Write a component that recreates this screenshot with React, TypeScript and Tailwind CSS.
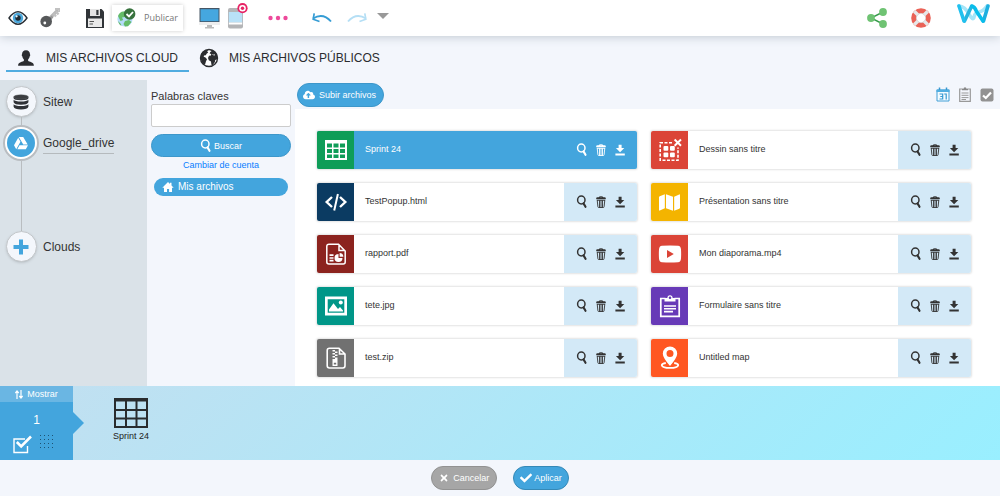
import { useState, type ReactNode } from "react";
import { FaCheck, FaCloudUploadAlt, FaGoogleDrive, FaMap, FaTimes } from "react-icons/fa";

type IconProps = { className?: string };

function Svg({ className = "", box = "0 0 24 24", children }: IconProps & { box?: string; children: ReactNode }) {
  return (
    <svg viewBox={box} className={className} fill="none" stroke="none" aria-hidden="true">
      {children}
    </svg>
  );
}

const SearchIcon = ({ className }: IconProps) => (
  <Svg className={className} box="0 0 12 14">
    <ellipse cx="5.3" cy="5" rx="3.7" ry="3.9" stroke="currentColor" strokeWidth="1.5" />
    <path d="M7.5 8.4 9.5 11.800" stroke="currentColor" strokeWidth="2.100" strokeLinecap="round" />
  </Svg>
);

const TrashIcon = ({ className }: IconProps) => (
  <Svg className={className} box="0 0 12 14">
    <path d="M1.200 4.200V3.200Q1.200 2.300 2.400 2.300H3.700Q4 1.200 6 1.200T8.300 2.300H9.600Q10.800 2.300 10.800 3.200v1ZM4.700 2.300h2.600Q6 1.700 4.700 2.300Z" fill="currentColor" fillRule="evenodd" />
    <path d="M2.200 5 2.900 11.700Q3 12.500 3.600 12.500H8.400Q9 12.500 9.100 11.700L9.800 5M2 5.300H10M4.500 5.200V12.500M6 5.200V12.500M7.500 5.200V12.500" stroke="currentColor" strokeWidth=".9" />
  </Svg>
);

const DownloadIcon = ({ className }: IconProps) => (
  <Svg className={className} box="0 0 12 14">
    <path d="M4.600 1.800H7.600V5H10.300L6.100 9.300 1.900 5H4.600ZM1.400 10.500H10.800V12.500H1.400Z" fill="currentColor" />
  </Svg>
);

const SheetIcon = ({ className }: IconProps) => (
  <Svg className={className}>
    <path
      fill="currentColor"
      fillRule="evenodd"
      d="M1 2H23V22H1ZM3 5.500V9.500H8V5.500ZM9.500 5.500V9.500H14.500V5.500ZM16 5.500V9.500H21V5.500ZM3 11V15H8V11ZM9.500 11V15H14.500V11ZM16 11V15H21V11ZM3 16.500V20H8V16.500ZM9.500 16.500V20H14.500V16.500ZM16 16.500V20H21V16.500Z"
    />
  </Svg>
);

const CodeIcon = ({ className }: IconProps) => (
  <Svg className={className}>
    <path d="M8 7 2.700 12 8 17M16 7 21.300 12 16 17" stroke="currentColor" strokeWidth="2.400" />
    <path d="M13.900 4 10.200 20.500" stroke="currentColor" strokeWidth="2" />
  </Svg>
);

const PdfIcon = ({ className }: IconProps) => (
  <Svg className={className}>
    <path d="M14.500 2.200H5Q2.800 2.200 2.800 4.400V20Q2.800 22 5 22H19.200Q21.200 22 21.200 20V9ZM15 2.500V8.500H21" stroke="currentColor" strokeWidth="1.500" />
    <path d="M5.500 13.200H9.500M5.500 16H9.500M5.500 18.700H9.500" stroke="currentColor" strokeWidth="1.700" />
    <path d="M14.500 12V16H18.500A4 4 0 1 1 14.500 12Z" fill="currentColor" />
    <path d="M15.600 11A4 4 0 0 1 19.400 14.800H15.600Z" fill="currentColor" />
  </Svg>
);

const ImageIcon = ({ className }: IconProps) => (
  <Svg className={className}>
    <path fill="currentColor" fillRule="evenodd" d="M1 2.500H23V21.500H1ZM3.700 5.200V18.800H20.300V5.200Z" />
    <path fill="currentColor" d="M5 17.500V15.500L9.500 9.300 14 15 16 13 19 16.500V17.500Z" />
    <circle cx="16.800" cy="8.500" r="2" fill="currentColor" />
  </Svg>
);

const ZipIcon = ({ className }: IconProps) => (
  <Svg className={className}>
    <path d="M15 2.200H5.500Q3.200 2.200 3.200 4.400V19.800Q3.200 22 5.500 22H18.800Q21 22 21 19.800V8ZM15.500 2.500V8H21" stroke="currentColor" strokeWidth="1.600" />
    <path d="M8.500 4H11V5.500H8.500ZM11 5.500H13.500V7H11ZM8.500 7H11V8.500H8.500ZM11 8.500H13.500V10H11ZM8.500 10H11V11.500H8.500ZM11 11.500H13.500V13H11Z" fill="currentColor" />
    <path fill="currentColor" fillRule="evenodd" d="M8.500 13H13.500V20H8.500ZM9.800 16.700V18.500H12.200V16.700Z" />
  </Svg>
);

const DrawingIcon = ({ className }: IconProps) => (
  <Svg className={className}>
    <path d="M14 4.800H2.200V22.200H20V9.500" stroke="currentColor" strokeWidth="1.600" strokeDasharray="3 1.500" />
    <g fill="currentColor">
      <rect x="5.500" y="8" width="4.800" height="4.800" rx="1" />
      <rect x="12" y="8" width="4.800" height="4.800" rx="1" />
      <rect x="5.500" y="14.500" width="4.800" height="4.800" rx="1" />
      <rect x="12" y="14.500" width="4.800" height="4.800" rx="1" />
    </g>
    <path d="M16.600 1.500 23 7.800M23 1.500 16.600 7.800" stroke="currentColor" strokeWidth="1.900" />
  </Svg>
);

const VideoIcon = ({ className }: IconProps) => (
  <Svg className={className}>
    <path fill="currentColor" fillRule="evenodd" d="M4 3.800Q12 3.200 20 3.800 22.800 4 23 7.500 23.300 12 23 16.500 22.800 20 20 20.200 12 20.800 4 20.200 1.200 20 1 16.500.700 12 1 7.500 1.200 4 4 3.800ZM9 8V16L15.800 12Z" />
  </Svg>
);

const FormIcon = ({ className }: IconProps) => (
  <Svg className={className}>
    <path d="M7.500 4.500H2.800V22.300H21.200V4.500H16.500" stroke="currentColor" strokeWidth="1.700" />
    <path fill="currentColor" fillRule="evenodd" d="M6.500 7.500V4H9.300Q9.600 1.200 12 1.200T14.700 4H17.500V7.500ZM12 2.500A1.300 1.300 0 1 0 12 5.100 1.300 1.300 0 0 0 12 2.500Z" />
    <path d="M6 12H18M6 14.800H18M6 17.600H15" stroke="currentColor" strokeWidth="1.600" />
  </Svg>
);

const PinIcon = ({ className }: IconProps) => (
  <Svg className={className}>
    <path fill="currentColor" fillRule="evenodd" d="M12 .500A7.200 7.200 0 0 1 19.200 7.700Q19.200 11.500 12 20 4.800 11.500 4.800 7.700A7.200 7.200 0 0 1 12 .500ZM12 4A3.500 3.500 0 1 0 12 11 3.500 3.500 0 0 0 12 4Z" />
    <path d="M7.800 17Q3.800 17.700 3.800 19.200 4.500 21.900 12 21.900T20.200 19.200Q20.200 17.700 16.200 17" stroke="currentColor" strokeWidth="1.800" />
  </Svg>
);

const PersonIcon = ({ className }: IconProps) => (
  <Svg className={className} box="0 0 16 16">
    <path fill="currentColor" d="M8 .300C10.700.300 12 2 12 4.500 12.500 4.700 12.300 6 11.700 6.300 11.500 7.800 11 8.700 10.100 9.400V10.800C11 12 15.800 11.700 15.900 15.700H.100C.200 11.700 5 12 5.900 10.800V9.400C5 8.700 4.500 7.800 4.300 6.300 3.700 6 3.500 4.700 4 4.500 4 2 5.300.300 8 .300Z" />
  </Svg>
);

const GlobeIcon = ({ className }: IconProps) => (
  <Svg className={className} box="0 0 20 20">
    <circle cx="10" cy="10" r="8.500" fill="#fff" stroke="currentColor" strokeWidth="1.400" />
    <path
      fill="currentColor"
      d="M1.800 7Q3 3.500 7 2L9.300 2.300 8.200 3.700 9.300 4.600 7.600 5.800 6.800 7.200 5 7.600 4.700 8.800 6.500 9.600 8 11.200 7 13.200 6.300 15.800 5 16.800Q2 14 1.500 10ZM10.800 1.500 15 2.800 18 6.500 18.700 10 17.600 11.500 16.200 12 15.900 14 13.600 17.200 12.400 16.700 12 13.500 9.800 12.200 9 10 10 7.800 12 7.400 12.200 6 10.600 5.600 11.300 4 12.500 3.200Z"
    />
    <path d="M13.500 6 14.800 7.300 16 6.500" stroke="#fff" strokeWidth=".8" />
  </Svg>
);

const DatabaseIcon = ({ className }: IconProps) => (
  <Svg className={className} box="0 0 16 16">
    <g fill="#303237">
      <path d="M.600 2.800V4.300Q.600 6.200 8 6.200T15.400 4.300V2.800Z" />
      <path d="M.600 5.700Q2 7.500 8 7.500T15.400 5.700V8.200Q14.500 10.700 8 10.700T.600 8.200ZM.600 10.200Q2 12 8 12T15.400 10.200V12.800Q14.500 15.400 8 15.400T.600 12.800Z" />
    </g>
    <ellipse cx="8" cy="2.900" rx="7.300" ry="2.200" fill="#3b3d41" stroke="#66696c" strokeWidth=".4" />
  </Svg>
);

const HomeIcon = ({ className }: IconProps) => (
  <Svg className={className} box="0 0 12 12">
    <path fill="currentColor" d="M6 1 8 3V1.800H9.500V4.400L11.700 6.700H10V11H7.100V8H5V11H2V6.700H.300Z" />
  </Svg>
);

const EyeIcon = ({ className }: IconProps) => (
  <Svg className={className} box="0 0 20 16">
    <path d="M1 8Q10-4.500 19 8 10 20.500 1 8Z" fill="#fff" stroke="#292f35" strokeWidth="1.400" />
    <circle cx="10" cy="8" r="5.200" fill="#4aa7db" />
    <circle cx="10" cy="8" r="2.700" fill="#202a32" />
    <circle cx="8.600" cy="6.300" r="1.100" fill="#e9f8ff" />
  </Svg>
);

const KeyIcon = ({ className }: IconProps) => (
  <Svg className={className} box="0 0 20 20">
    <path d="M8 12 18 2" stroke="#b7b7b7" strokeWidth="3.200" />
    <path d="M13.500 5.500 16 8.500M16 3.500 18.500 6.500M15 1H19.500V4" stroke="#c1c1c1" strokeWidth="2.200" />
    <path d="M8 13 12.500 8.500" stroke="#969696" strokeWidth="2.500" />
    <circle cx="6.200" cy="13.500" r="5.800" fill="#56585a" />
    <circle cx="4.800" cy="15" r="1.400" fill="#fff" />
  </Svg>
);

const SaveIcon = ({ className }: IconProps) => (
  <Svg className={className} box="0 0 18 19">
    <path d="M0 0H15.500L18 2.500V19H0Z" fill="#303438" />
    <path d="M4 0H14V7H4Z" fill="#e4e4e4" />
    <path d="M10.300 1H12.500V6H10.300Z" fill="#34383c" />
    <path d="M2 9.500H16V18H2Z" fill="#e9e9e9" />
    <path d="M3.500 12.500H8M3.500 15H7" stroke="#555" strokeWidth="1" />
  </Svg>
);

const PublishIcon = ({ className }: IconProps) => (
  <Svg className={className} box="0 0 19 20">
    <circle cx="8" cy="11" r="7.600" fill="#b5dcf8" />
    <path d="M1 8Q3 3 7 3.500L10 6 8 9 5 9.500 6.200 12 3.500 13ZM8 13 12 12 14.500 14 11 18.200 8 18.500 6.500 16ZM1 13 4 16 4.300 18Q1.500 16 1 13Z" fill="#65bc69" />
    <circle cx="12.600" cy="6" r="5.800" fill="#37723d" />
    <path d="M9.500 6 12 8.400 16 4" stroke="#fff" strokeWidth="1.800" />
  </Svg>
);

const DesktopIcon = ({ className }: IconProps) => (
  <Svg className={className} box="0 0 21 21">
    <path d="M.500 0H20.500V14H.500Z" fill="#465665" />
    <path d="M1.500 1.200H19.500V13.200H1.500Z" fill="#45a7df" />
    <path d="M0 14H21V17H0Z" fill="#eee" />
    <path d="M8 17H13V19H15V20.500H6V19H8Z" fill="#bbb" />
  </Svg>
);

const PhoneIcon = ({ className }: IconProps) => (
  <Svg className={className} box="0 0 20 26">
    <rect x="0" y="5" width="15" height="20.500" rx="2" fill="#b4b5b7" />
    <path d="M.800 9H14.200V19.500H.800Z" fill="#b9e1f7" />
    <path d="M.800 19.500H14.200V21.500H.800Z" fill="#fff" />
    <circle cx="14.500" cy="5.200" r="5.100" fill="#e72264" />
    <circle cx="14.500" cy="5.200" r="3.300" fill="#fff" />
    <circle cx="14.500" cy="5.200" r="1.700" fill="#e72264" />
  </Svg>
);

const UndoIcon = ({ className }: IconProps) => (
  <Svg className={className} box="0 0 20 10">
    <path d="M1 5.500Q11-.700 19 8.500" stroke="currentColor" strokeWidth="1.900" />
    <path d="M2.200.300 1.200 6.200 7.500 8.500" stroke="currentColor" strokeWidth="1.700" />
  </Svg>
);

const ShareIcon = ({ className }: IconProps) => (
  <Svg className={className} box="0 0 20 20">
    <path d="M16 4 4 10 16 16" stroke="#399b4c" strokeWidth="1.400" />
    <g fill="#6fc373">
      <circle cx="16" cy="4" r="3.900" />
      <circle cx="4" cy="10" r="3.900" />
      <circle cx="16" cy="16" r="3.900" />
    </g>
  </Svg>
);

const LifebuoyIcon = ({ className }: IconProps) => (
  <Svg className={className} box="0 0 20 20">
    <circle cx="10" cy="10" r="7.200" stroke="#ea6257" strokeWidth="5.200" />
    <path d="M3.200 3.200 7 7M13 13 16.800 16.800M16.800 3.200 13 7M7 13 3.200 16.800" stroke="#e6e8e9" strokeWidth="3.400" />
    <circle cx="10" cy="10" r="4.600" stroke="#d4dce0" strokeWidth=".7" />
  </Svg>
);

const BrandIcon = ({ className }: IconProps) => (
  <Svg className={className} box="0 0 33 19">
    <g strokeWidth="3.600" strokeLinecap="round" strokeLinejoin="round">
      <path d="M2 2Q8 2.500 12 10T17 13 22 8 30 2" stroke="#a5e5f8" />
      <path d="M7.500 17 14.500 2.500" stroke="#28b5de" />
      <path d="M26.500 17 31 2" stroke="#1dafe0" />
      <path d="M2 2 7 17" stroke="#21c1ef" />
      <path d="M15 2Q18 3 19.500 7.500L26 17" stroke="#09bdeb" />
    </g>
  </Svg>
);

const CalendarIcon = ({ className }: IconProps) => (
  <Svg className={className} box="0 0 14 15">
    <path d="M1 3H13V14H1Z" fill="#f3fbff" stroke="#429fd6" />
    <path d="M.500 2.500H13.500V5H.500Z" fill="#50aee1" />
    <path d="M3.500.500V3M10.500.500V3" stroke="#3998cf" strokeWidth="1.500" />
    <path d="M3.500 7H6.700V12H3.500M4.300 9.500H6.700M8.200 7H10.200V12.500" stroke="#369bd3" strokeWidth="1.200" />
  </Svg>
);

const ListIcon = ({ className }: IconProps) => (
  <Svg className={className} box="0 0 12 15">
    <path d="M3.500 2H.700V14.300H11.300V2H8.500" stroke="#999" strokeWidth="1.200" />
    <path d="M3 3.300V1.800H4.500Q4.500.300 6 .300T7.500 1.800H9V3.300Z" fill="#888" />
    <path d="M2.500 6H9.500M2.500 8.300H9.500M2.500 10.600H9.500M2.500 12.500H7" stroke="#999" />
  </Svg>
);

const SelectAllIcon = ({ className }: IconProps) => (
  <Svg className={className} box="0 0 14 14">
    <rect x=".500" y=".500" width="13" height="13" rx="2" fill="#929292" />
    <path d="M3 7.500 5.800 10 11 4.500" stroke="#fff" strokeWidth="2.200" />
  </Svg>
);

const SortIcon = ({ className }: IconProps) => (
  <Svg className={className} box="0 0 8 9">
    <path d="M2 9V1.500M.300 3 2 1 3.700 3M6 0V7.500M4.300 6 6 8 7.700 6" stroke="currentColor" strokeWidth="1.200" />
  </Svg>
);

const CheckboxIcon = ({ className }: IconProps) => (
  <Svg className={className} box="0 0 19 19">
    <path d="M14.500 11V17.500H1V4H12" stroke="currentColor" strokeWidth="1.400" />
    <path d="M3.800 7 8.200 11.500 18 1.500" stroke="currentColor" strokeWidth="2.600" />
  </Svg>
);

const DotsIcon = ({ className }: IconProps) => (
  <Svg className={className} box="0 0 14 14">
    {[1.5, 5.5, 9.5, 13.5].map((y) => (
      <path key={y} d={`M0 ${y}H14`} stroke="#1d5273" strokeWidth="1" strokeDasharray="1 3" />
    ))}
  </Svg>
);

type FileItem = { name: string; tile: string; icon: ReactNode };

const files: FileItem[] = [
  { name: "Sprint 24", tile: "bg-[#0f9d58]", icon: <SheetIcon className="size-6" /> },
  { name: "Dessin sans titre", tile: "bg-[#db4437]", icon: <DrawingIcon className="size-6" /> },
  { name: "TestPopup.html", tile: "bg-[#0b3b62]", icon: <CodeIcon className="size-6" /> },
  { name: "Présentation sans titre", tile: "bg-[#f4b400]", icon: <FaMap className="size-[21px]" /> },
  { name: "rapport.pdf", tile: "bg-[#8c231e]", icon: <PdfIcon className="size-6" /> },
  { name: "Mon diaporama.mp4", tile: "bg-[#db4437]", icon: <VideoIcon className="size-6" /> },
  { name: "tete.jpg", tile: "bg-[#009688]", icon: <ImageIcon className="size-6" /> },
  { name: "Formulaire sans titre", tile: "bg-[#673ab7]", icon: <FormIcon className="size-6" /> },
  { name: "test.zip", tile: "bg-[#717171]", icon: <ZipIcon className="size-6" /> },
  { name: "Untitled map", tile: "bg-[#ff5722]", icon: <PinIcon className="size-6" /> },
];

function FileCard({ file, selected, onSelect }: { file: FileItem; selected: boolean; onSelect: () => void }) {
  return (
    <li className={`flex h-[38px] overflow-hidden rounded-xs shadow-[0_0_2px_1px_#e3e3e3] ${selected ? "bg-[#43a5dd] text-white" : "bg-white text-[#333]"}`}>
      <button type="button" onClick={onSelect} className="flex min-w-0 flex-1 items-center text-left">
        <span className={`flex h-full w-[37px] shrink-0 items-center justify-center text-white ${file.tile}`}>{file.icon}</span>
        <span className="truncate px-[11px] pb-0.5 text-[9px]">{file.name}</span>
      </button>
      <div className={`flex w-[73px] items-center justify-center gap-[7px] ${selected ? "" : "bg-[#d3e9f7]"}`}>
        <button type="button" aria-label={`Ver ${file.name}`}><SearchIcon className="h-3.5 w-3" /></button>
        <button type="button" aria-label={`Eliminar ${file.name}`}><TrashIcon className="h-3.5 w-3" /></button>
        <button type="button" aria-label={`Descargar ${file.name}`}><DownloadIcon className="h-3.5 w-3" /></button>
      </div>
    </li>
  );
}

export default function App() {
  const [selected, setSelected] = useState("Sprint 24");
  return (
    <div className="flex min-h-screen flex-col bg-[#f3f6fc] font-['Liberation_Sans',Arial,sans-serif] text-xs text-[#333]">
      <header className="z-10 flex h-9 shrink-0 items-center justify-between bg-white pr-2.5 pl-2 shadow-[0_0_10px_#b8c1ca]">
        <div className="flex items-center">
          <button type="button" aria-label="Vista previa"><EyeIcon className="h-4 w-5" /></button>
          <button type="button" aria-label="Clave" className="ml-3"><KeyIcon className="size-5" /></button>
          <button type="button" aria-label="Guardar" className="ml-[26px]"><SaveIcon className="h-[19px] w-[18px]" /></button>
          <button type="button" className="ml-2 flex h-[26px] items-center gap-2 bg-white px-[5px] font-['Open_Sans',sans-serif] text-[9px] text-[#777] shadow-[0_0_4px_#ccc]">
            <PublishIcon className="h-5 w-[19px]" />
            Publicar
          </button>
          <button type="button" aria-label="Escritorio" className="ml-4"><DesktopIcon className="size-[21px]" /></button>
          <button type="button" aria-label="Móvil" className="-mt-1 ml-2"><PhoneIcon className="h-[26px] w-5" /></button>
          <button type="button" aria-label="Más" className="ml-5">
            <Svg className="h-1.5 w-5" box="0 0 20 6"><g fill="#ed499b"><circle cx="2.500" cy="3" r="2.200" /><circle cx="10" cy="3" r="2.200" /><circle cx="17.500" cy="3" r="2.200" /></g></Svg>
          </button>
          <button type="button" aria-label="Deshacer" className="ml-6"><UndoIcon className="h-2.5 w-5 text-[#359cd4]" /></button>
          <button type="button" aria-label="Rehacer" className="ml-[15px]"><UndoIcon className="h-2.5 w-5 -scale-x-100 text-[#b5dff5]" /></button>
          <button type="button" aria-label="Historial" className="mb-1 ml-2.5"><Svg className="h-1.5 w-3" box="0 0 12 6"><path d="M0 0H12L6 6Z" fill="#999" /></Svg></button>
        </div>
        <div className="flex items-center">
          <button type="button" aria-label="Compartir"><ShareIcon className="size-5" /></button>
          <button type="button" aria-label="Ayuda" className="ml-6"><LifebuoyIcon className="size-5" /></button>
          <a href="#inicio" aria-label="Inicio" className="mb-2.5 ml-[26px]"><BrandIcon className="h-[19px] w-[33px]" /></a>
        </div>
      </header>

      <nav className="flex h-11 shrink-0 gap-2.5 px-1.5 text-[#2b2d30]">
        <a href="#cloud" className="flex h-9 items-center gap-3 border-b-2 border-[#50ace0] pt-2.5 pr-[11px] pl-3">
          <PersonIcon className="size-4" />MIS ARCHIVOS CLOUD
        </a>
        <a href="#publicos" className="flex h-9 items-center gap-2.5 pt-2">
          <GlobeIcon className="size-5" />MIS ARCHIVOS PÚBLICOS
        </a>
      </nav>

      <main className="flex flex-1">
        <aside className="w-[147px] shrink-0 bg-[#dae2e8] px-[3px] pt-1.5">
          <ul className="flex flex-col items-start">
            <li>
              <button type="button" className="flex items-center gap-1">
                <span className="flex w-9 justify-center">
                  <span className="flex size-[31px] items-center justify-center rounded-full border border-[#c3c7ca] bg-[#f4f7fc] shadow-sm"><DatabaseIcon className="size-4" /></span>
                </span>
                Sitew
              </button>
            </li>
            <li className="ml-[18px] h-2 w-px bg-[#b9bdc0]" />
            <li>
              <button type="button" className="flex items-center gap-1">
                <span className="flex size-9 items-center justify-center rounded-full border-2 border-[#b9bdc1] bg-white p-0.5">
                  <span className="flex size-full items-center justify-center rounded-full bg-[#43a5dd] text-white"><FaGoogleDrive className="size-3.5" /></span>
                </span>
                <span className="border-b border-[#b5babd] pt-0.5 pb-0.5">Google_drive</span>
              </button>
            </li>
            <li className="ml-[18px] h-[70px] w-px bg-[#b9bdc0]" />
            <li>
              <button type="button" className="flex items-center gap-1">
                <span className="flex w-9 justify-center">
                  <span className="flex size-[31px] items-center justify-center rounded-full border border-[#c3c7ca] bg-[#f4f7fc] shadow-sm">
                    <Svg className="size-4" box="0 0 16 16"><path d="M6 .500H10V6H15.500V10H10V15.500H6V10H.500V6H6Z" fill="#43a5dd" /></Svg>
                  </span>
                </span>
                Clouds
              </button>
            </li>
          </ul>
        </aside>

        <section className="flex w-[148px] shrink-0 flex-col px-1 pt-2">
          <label htmlFor="keywords" className="text-[11px] leading-4">Palabras claves</label>
          <input id="keywords" type="text" className="h-[23px] rounded-xs border border-[#ccc] bg-white px-1 text-[11px]" />
          <button type="button" className="mt-[7px] flex h-[23px] items-center justify-center gap-0.5 rounded-full border border-[#3d97ca] bg-[#43a5dd] text-[9px] text-white"><SearchIcon className="h-3.5 w-3" />Buscar</button>
          <a href="#cuenta" className="self-center text-[9px] leading-4 text-[#087dff]">Cambiar de cuenta</a>
          <button type="button" className="mx-[3px] mt-[5px] flex h-[18px] items-center gap-1 rounded-full bg-[#43a5dd] px-2 text-[10px] text-white"><HomeIcon className="size-3" />Mis archivos</button>
        </section>

        <section className="flex min-w-0 flex-1 flex-col">
          <div className="flex h-[29px] shrink-0 items-center justify-between pr-1.5 pl-0.5">
            <button type="button" className="flex h-6 items-center gap-1 rounded-full border border-[#3d97ca] bg-[#43a5dd] px-[5px] pr-[7px] text-[9px] text-white"><FaCloudUploadAlt className="size-3" />Subir archivos</button>
            <div className="flex items-center gap-[9px]">
              <button type="button" aria-label="Ordenar por fecha"><CalendarIcon className="h-[15px] w-3.5" /></button>
              <button type="button" aria-label="Ver lista"><ListIcon className="h-[15px] w-3" /></button>
              <button type="button" aria-label="Seleccionar todo"><SelectAllIcon className="size-3.5" /></button>
            </div>
          </div>
          <div className="flex-1 bg-white pt-[22px] pr-[29px] pb-[9px] pl-[22px]">
            <ul className="grid grid-cols-2 gap-3.5">
              {files.map((file) => (
                <FileCard key={file.name} file={file} selected={selected === file.name} onSelect={() => setSelected(file.name)} />
              ))}
            </ul>
          </div>
        </section>
      </main>

      <section className="flex h-[74px] shrink-0 bg-linear-[135deg] from-[#c3dff0] to-[#99efff]">
        <div className="relative flex w-[73px] shrink-0 flex-col bg-[#43a5dd] text-white">
          <button type="button" className="flex h-4 items-center justify-center gap-1 bg-[#6ab6e3] text-[9px]"><SortIcon className="h-[9px] w-2" />Mostrar</button>
          <span className="mt-2.5 text-center leading-4">1</span>
          <div className="mt-1.5 flex items-center gap-2 pl-[13px]">
            <button type="button" aria-label="Marcar todo"><CheckboxIcon className="size-[19px]" /></button>
            <button type="button" aria-label="Cuadrícula" className="mb-1.5"><DotsIcon className="size-3.5" /></button>
          </div>
          <span className="absolute top-[26px] left-full border-y-11 border-l-11 border-y-transparent border-l-[#43a5dd]" />
        </div>
        <figure className="ml-10 flex flex-col items-center pt-3 text-[9px] leading-3 text-[#222]">
          <Svg className="h-[30px] w-[34px]" box="0 0 34 30">
            <path d="M1 1H33V29H1ZM1 2.500H33M1 12H33M1 20.500H33M12 3V29M22.500 3V29" stroke="#292c2e" strokeWidth="2" />
          </Svg>
          <figcaption className="mt-0.5">Sprint 24</figcaption>
        </figure>
      </section>

      <footer className="flex h-9 shrink-0 items-center justify-center gap-4 text-[9px] text-white">
        <button type="button" className="flex h-6 items-center gap-1 rounded-full border border-[#929292] bg-[#a6a6a6] px-[7px]"><FaTimes className="size-2.5" />Cancelar</button>
        <button type="button" className="flex h-6 items-center gap-0.5 rounded-full border border-[#3589b7] bg-[#43a5dd] px-1.5"><FaCheck className="size-3" />Aplicar</button>
      </footer>
    </div>
  );
}
